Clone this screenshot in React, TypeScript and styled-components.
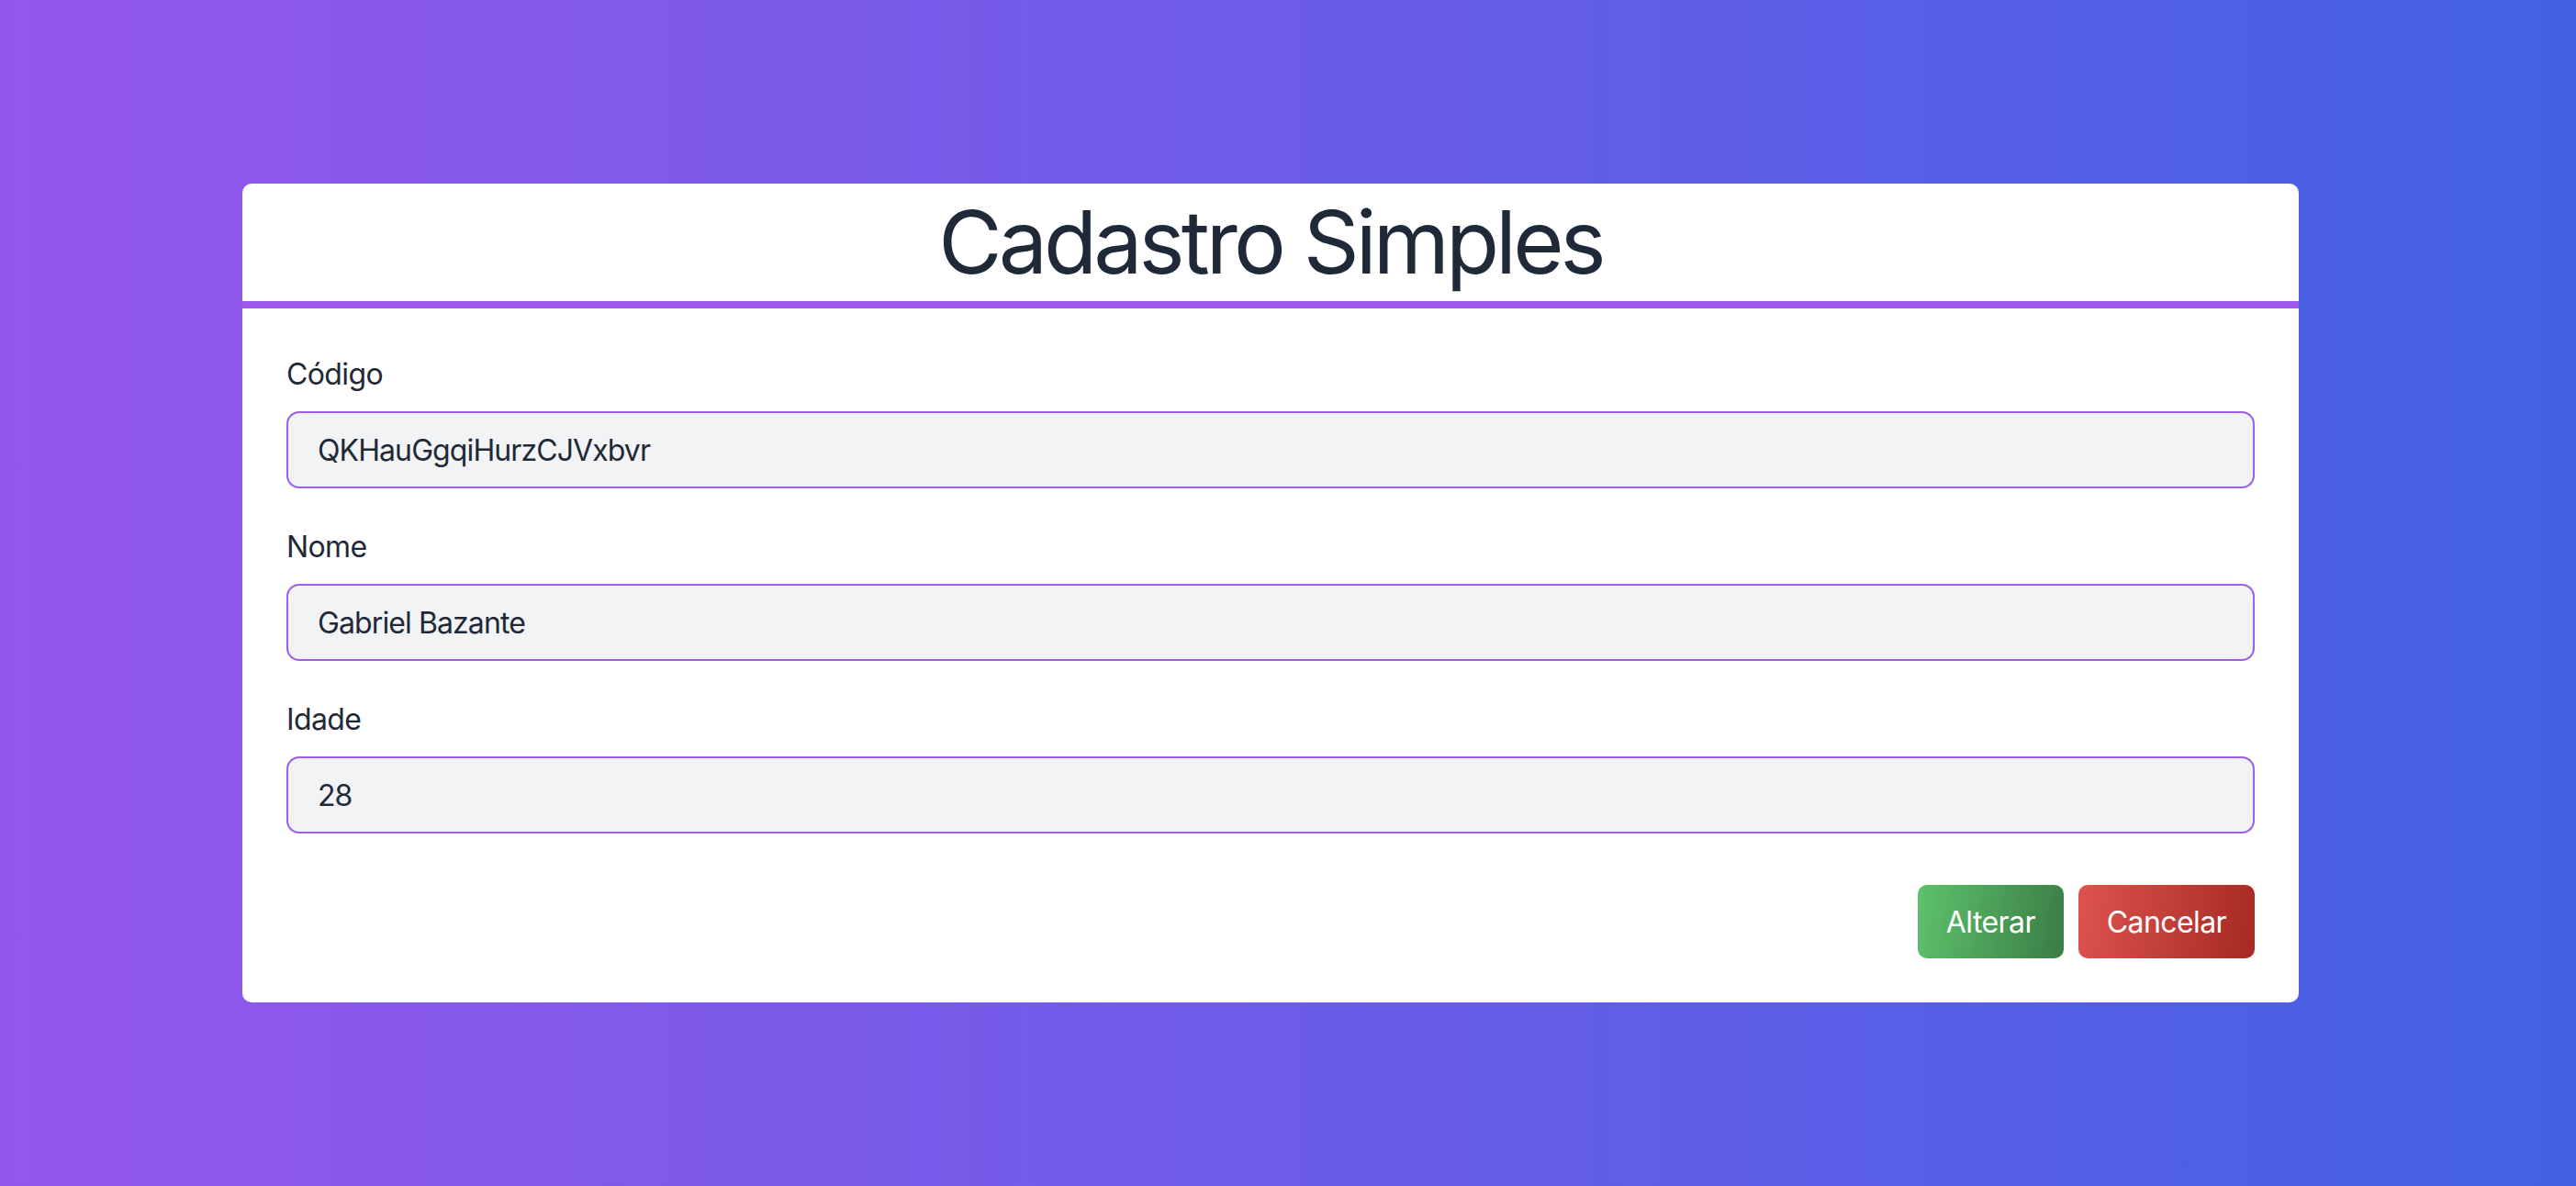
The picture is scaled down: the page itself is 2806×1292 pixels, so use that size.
import React from "react";
import styled, { createGlobalStyle } from "styled-components";

const GlobalStyle = createGlobalStyle`
  * { box-sizing: border-box; }
  html, body { margin: 0; padding: 0; }
  body {
    font-family: Inter, "Noto Sans", sans-serif;
    color: #1f2937;
  }
`;

const Page = styled.div`
  width: 2806px;
  height: 1292px;
  background: linear-gradient(to right, #9457eb 0%, #6c5ce8 50%, #4361e4 100%);
  padding: 200px 0 0 264px;
  display: flex;
  align-items: flex-start;
`;

const Card = styled.div`
  width: 2240px;
  background: #ffffff;
  border-radius: 10px;
  overflow: hidden;
  display: flex;
  flex-direction: column;
`;

const Header = styled.div`
  height: 136px;
  border-bottom: 8px solid #9f58ec;
  display: flex;
  align-items: center;
  justify-content: center;
`;

const Title = styled.h1`
  margin: 0;
  font-family: Inter, "Noto Sans", sans-serif;
  font-weight: 400;
  font-size: 95px;
  line-height: 1.2;
  letter-spacing: -0.042em;
  color: #1f2937;
`;

const Body = styled.form`
  padding: 48px;
  display: flex;
  flex-direction: column;
`;

const Field = styled.div`
  display: flex;
  flex-direction: column;
  gap: 16px;
  margin-bottom: 40px;
`;

const Label = styled.label`
  font-size: 32px;
  line-height: 48px;
  letter-spacing: -0.6px;
  color: #1f2937;
`;

const Input = styled.input`
  height: 84px;
  width: 100%;
  padding: 0 32px;
  border: 2px solid #a05cec;
  border-radius: 14px;
  background: #f2f3f5;
  font-family: Inter, "Noto Sans", sans-serif;
  font-size: 32px;
  line-height: 48px;
  letter-spacing: -0.9px;
  color: #1f2937;
  outline: none;
`;

const Actions = styled.div`
  display: flex;
  justify-content: flex-end;
  gap: 16px;
  margin-top: 16px;
`;

const Button = styled.button<{ $variant: "green" | "red" }>`
  height: 80px;
  padding: 0 31px;
  border: none;
  border-radius: 10px;
  font-family: Inter, "Noto Sans", sans-serif;
  font-size: 32px;
  letter-spacing: -0.6px;
  color: #ffffff;
  cursor: pointer;
  background: ${(p) =>
    p.$variant === "green"
      ? "linear-gradient(100deg, #5ec26c 0%, #3a7c45 100%)"
      : "linear-gradient(100deg, #de544f 0%, #a52924 100%)"};
`;

export default function App() {
  return (
    <>
      <GlobalStyle />
      <Page>
        <Card>
          <Header>
            <Title>Cadastro Simples</Title>
          </Header>
          <Body onSubmit={(e) => e.preventDefault()}>
            <Field>
              <Label>Código</Label>
              <Input defaultValue="QKHauGgqiHurzCJVxbvr" />
            </Field>
            <Field>
              <Label>Nome</Label>
              <Input defaultValue="Gabriel Bazante" />
            </Field>
            <Field>
              <Label>Idade</Label>
              <Input defaultValue="28" />
            </Field>
            <Actions>
              <Button type="button" $variant="green">Alterar</Button>
              <Button type="button" $variant="red">Cancelar</Button>
            </Actions>
          </Body>
        </Card>
      </Page>
    </>
  );
}
